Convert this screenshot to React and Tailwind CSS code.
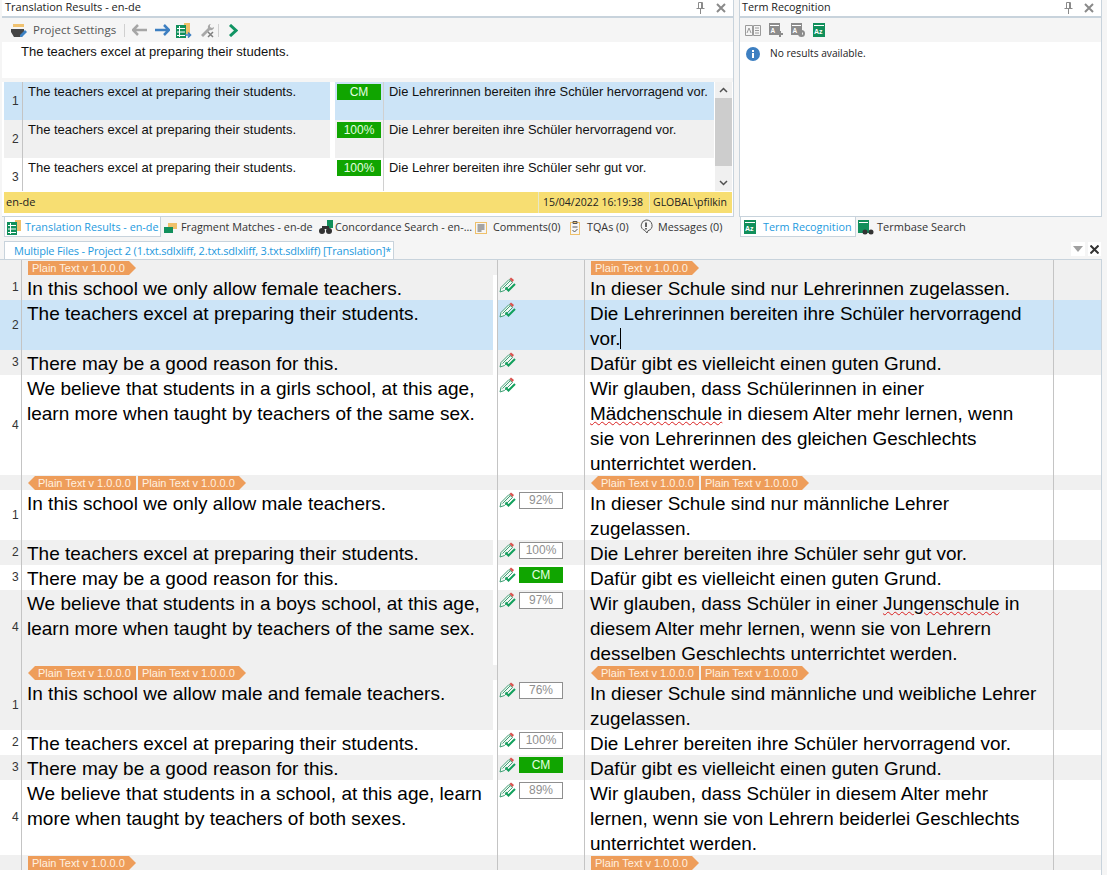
const sans = "font-['Liberation_Sans',Arial,sans-serif]";
const ui = "font-['Open_Sans','Noto_Sans',sans-serif]";

const results = [
  { n: 1, cls: "bg-[#cce4f7]", src: "The teachers excel at preparing their students.", badge: "CM", tgt: "Die Lehrerinnen bereiten ihre Schüler hervorragend vor.", h: "h-[38px]" },
  { n: 2, cls: "bg-[#f0f0f0]", src: "The teachers excel at preparing their students.", badge: "100%", tgt: "Die Lehrer bereiten ihre Schüler hervorragend vor.", h: "h-[38px]" },
  { n: 3, cls: "bg-white", src: "The teachers excel at preparing their students.", badge: "100%", tgt: "Die Lehrer bereiten ihre Schüler sehr gut vor.", h: "h-[33px]" },
];

const rows = [
  { tags: "single" },
  { n: 1, bg: "bg-[#f0f0f0]", h: "h-[25px]", src: "In this school we only allow female teachers.", tgt: "In dieser Schule sind nur Lehrerinnen zugelassen." },
  { n: 2, bg: "bg-[#cce4f7]", h: "h-[50px]", src: "The teachers excel at preparing their students.", tgt: "Die Lehrerinnen bereiten ihre Schüler hervorragend vor.", caret: true },
  { n: 3, bg: "bg-[#f0f0f0]", h: "h-[25px]", src: "There may be a good reason for this.", tgt: "Dafür gibt es vielleicht einen guten Grund." },
  { n: 4, bg: "bg-white", h: "h-[100px]", src: "We believe that students in a girls school, at this age, learn more when taught by teachers of the same sex.", tgt: <>Wir glauben, dass Schülerinnen in einer <Wavy>Mädchenschule</Wavy> in diesem Alter mehr lernen, wenn sie von Lehrerinnen des gleichen Geschlechts unterrichtet werden.</> },
  { tags: "double" },
  { n: 1, bg: "bg-white", h: "h-[50px]", src: "In this school we only allow male teachers.", tgt: "In dieser Schule sind nur männliche Lehrer zugelassen.", match: "92%" },
  { n: 2, bg: "bg-[#f0f0f0]", h: "h-[25px]", src: "The teachers excel at preparing their students.", tgt: "Die Lehrer bereiten ihre Schüler sehr gut vor.", match: "100%" },
  { n: 3, bg: "bg-white", h: "h-[25px]", src: "There may be a good reason for this.", tgt: "Dafür gibt es vielleicht einen guten Grund.", match: "CM" },
  { n: 4, bg: "bg-[#f0f0f0]", h: "h-[75px]", src: "We believe that students in a boys school, at this age, learn more when taught by teachers of the same sex.", tgt: <>Wir glauben, dass Schüler in einer <Wavy>Jungenschule</Wavy> in diesem Alter mehr lernen, wenn sie von Lehrern desselben Geschlechts unterrichtet werden.</>, match: "97%" },
  { tags: "double" },
  { n: 1, bg: "bg-[#f0f0f0]", h: "h-[50px]", src: "In this school we allow male and female teachers.", tgt: "In dieser Schule sind männliche und weibliche Lehrer zugelassen.", match: "76%" },
  { n: 2, bg: "bg-white", h: "h-[25px]", src: "The teachers excel at preparing their students.", tgt: "Die Lehrer bereiten ihre Schüler hervorragend vor.", match: "100%" },
  { n: 3, bg: "bg-[#f0f0f0]", h: "h-[25px]", src: "There may be a good reason for this.", tgt: "Dafür gibt es vielleicht einen guten Grund.", match: "CM" },
  { n: 4, bg: "bg-white", h: "h-[75px]", src: "We believe that students in a school, at this age, learn more when taught by teachers of both sexes.", tgt: "Wir glauben, dass Schüler in diesem Alter mehr lernen, wenn sie von Lehrern beiderlei Geschlechts unterrichtet werden.", match: "89%" },
  { tags: "single" },
];

function Wavy({ children }) {
  return <span className="underline decoration-wavy decoration-[#d92020] decoration-1 underline-offset-1">{children}</span>;
}

const PinClose = () => (
  <div className="flex items-center gap-[11px] mr-[7px]">
    <svg width="9" height="12" viewBox="0 0 9 12" fill="none" stroke="#8a8a8a"><path d="M2.5.5h4v6h-4zM.5 6.5h8M4.5 7v5M5.5 1v5" /></svg>
    <svg width="10" height="10" viewBox="0 0 10 10" stroke="#8a8a8a" strokeWidth="2"><path d="M1 1l8 8M9 1l-8 8" /></svg>
  </div>
);

const Tag = ({ dir }) => (
  <span className={`h-[14px] bg-[#ee9d5a] text-[#fff0e0] text-[11px] leading-[14px] ${sans} whitespace-nowrap ${
    dir === "left"
      ? "w-[108px] pl-[10px] [clip-path:polygon(7px_0,100%_0,100%_100%,7px_100%,0_50%)]"
      : "w-[108px] pl-[4px] [clip-path:polygon(0_0,calc(100%-7px)_0,100%_50%,calc(100%-7px)_100%,0_100%)]"
  }`}>Plain Text v 1.0.0.0</span>
);

const PencilCheck = () => (
  <svg width="17" height="16" viewBox="0 0 17 16" className="shrink-0">
    <path d="M1 15l1-4.500 8-8 3.500 3-8 8z" fill="#f2f8f4" stroke="#3f9f74" strokeWidth="1" />
    <path d="M3.500 11.500l8-8" stroke="#3f9f74" strokeWidth="1" />
    <path d="M10.500 2l1.500-1.500 3 2.500-1.500 2z" fill="#d9534f" />
    <path d="M6.500 10.500l3 3 6.500-6.500" fill="none" stroke="#12a05c" strokeWidth="2" />
  </svg>
);

const Match = ({ value }) =>
  value === "CM" ? (
    <span className={`w-[44px] h-[16px] bg-[#10a500] text-[#e4ffe0] text-[12px] leading-[16px] text-center ${sans}`}>CM</span>
  ) : (
    <span className={`w-[44px] h-[17px] bg-white border border-[#8f8f8f] text-[#8f8f8f] text-[12px] leading-[14px] text-center ${sans}`}>{value}</span>
  );

const AzIcon = () => (
  <svg width="12" height="14" viewBox="0 0 12 14" className="shrink-0">
    <rect width="12" height="14" fill="#118f5b" />
    <rect x="1" y="2" width="10" height="1" fill="#fff" />
    <text x="1" y="11" fontSize="7" fontWeight="bold" fill="#fff" fontFamily="Liberation Sans">Az</text>
  </svg>
);

const GridIcon = ({ className, arrow }) => (
  <svg width="16" height="15" viewBox="0 0 16 15" className={className}>
    <rect x="8" y="0" width="6" height="11" fill="#efc06a" />
    <rect x="0" y="2" width="10" height="13" fill="#118f5b" />
    <path d="M1 5.500h8M1 9h8M1 12.500h8M3.500 3v11" stroke="#fff" strokeWidth="1" />
    {arrow && <path d="M9 12h5M12 9.500l2.500 2.500-2.500 2.500" fill="none" stroke="#3d7fc1" strokeWidth="1.600" />}
  </svg>
);

const GrayDoc = ({ children }) => (
  <svg width="14" height="14" viewBox="0 0 14 14" className="shrink-0">
    <rect x="0" y="0" width="11" height="12" fill="#8c8c8c" />
    <rect x="1" y="2" width="9" height="1" fill="#fff" />
    <text x="1.500" y="10" fontSize="6.500" fontWeight="bold" fill="#fff" fontFamily="Liberation Sans">A</text>
    {children}
  </svg>
);

function Toolbar() {
  return (
    <div className={`h-[24px] bg-[#f5f5f5] flex items-center pl-[9px] text-[11.500px] text-[#555] ${ui}`}>
      <svg width="17" height="15" viewBox="0 0 17 15" className="shrink-0">
        <path d="M2 1h11v3H2z" fill="#f0c270" />
        <path d="M0 6h13v3l-2 5H3L0 9z" fill="#444" />
        <path d="M9 12l5-5 2 2-5 5H9z" fill="#3d82c4" />
      </svg>
      <span className="ml-[5px] w-[84px] whitespace-nowrap">Project Settings</span>
      <div className="w-px h-[13px] bg-[#d0d0d0] ml-[7px]" />
      <svg width="16" height="12" viewBox="0 0 16 12" className="ml-[7px]"><path d="M6 1L1 6l5 5M1 6h14" fill="none" stroke="#a6a6a6" strokeWidth="2.500" /></svg>
      <svg width="16" height="12" viewBox="0 0 16 12" className="ml-[6px]"><path d="M10 1l5 5-5 5M15 6H1" fill="none" stroke="#3d7fc1" strokeWidth="2.500" /></svg>
      <GridIcon className="ml-[6px]" arrow />
      <svg width="16" height="15" viewBox="0 0 16 15" className="ml-[7px]">
        <path d="M12 1a3 3 0 0 0-3 4L2 12l2 2 7-7a3 3 0 0 0 4-3l-2 1-2-1 0-2z" fill="#a8a8a8" />
        <path d="M9 9l5 5M14 9l-5 5" stroke="#808080" strokeWidth="1.500" />
      </svg>
      <div className="w-px h-[13px] bg-[#d0d0d0] ml-[3px]" />
      <svg width="10" height="13" viewBox="0 0 10 13" className="ml-[9px]"><path d="M2 1l6 5.500-6 5.500" fill="none" stroke="#119463" strokeWidth="3" /></svg>
    </div>
  );
}

function ResultRow({ r }) {
  return (
    <div className={`flex ${r.h}`}>
      <div className={`w-[19px] ${r.cls} border-r border-[#c4c4c4] pt-[12px] pl-[8px] text-[12px] leading-[14px] text-[#333]`}>{r.n}</div>
      <div className={`w-[307px] ${r.cls} pl-[5px] pt-[1px] leading-[17px] text-[13px] text-[#111] whitespace-nowrap`}>{r.src}</div>
      <div className="w-[5px] bg-white" />
      <div className={`w-[49px] ${r.cls} border-r border-[#d0d0d0] pl-[2px] pt-[2px] flex items-start`}>
        {r.badge === "CM" ? <Match value="CM" /> : <span className={`w-[44px] h-[16px] bg-[#10a500] text-[#e4ffe0] text-[12px] leading-[16px] text-center ${sans}`}>{r.badge}</span>}
      </div>
      <div className={`w-[330px] ${r.cls} pl-[5px] pt-[1px] leading-[17px] text-[12.900px] text-[#111] whitespace-nowrap`}>{r.tgt}</div>
    </div>
  );
}

function Scrollbar() {
  return (
    <div className="w-[17px] h-full bg-[#f0f0f0] flex flex-col ml-[1px]">
      <div className="h-[16px] flex items-center justify-center">
        <svg width="9" height="6" viewBox="0 0 9 6"><path d="M1 5l3.500-3.500L8 5" fill="none" stroke="#505050" strokeWidth="1.500" /></svg>
      </div>
      <div className="h-[68px] bg-[#cdcdcd]" />
      <div className="flex-1" />
      <div className="h-[16px] flex items-center justify-center">
        <svg width="9" height="6" viewBox="0 0 9 6"><path d="M1 1l3.500 3.500L8 1" fill="none" stroke="#505050" strokeWidth="1.500" /></svg>
      </div>
    </div>
  );
}

function TranslationPanel() {
  return (
    <div className="w-[732px] ml-[2px] h-[217px] bg-white border-r border-b border-[#c8d3dc] flex flex-col">
      <div className="h-[18px] flex items-center justify-between border-b-2 border-[#c8d3dc]">
        <span className={`pl-[3px] -mt-[1px] text-[11px] text-[#222] ${ui}`}>Translation Results - en-de</span>
        <PinClose />
      </div>
      <Toolbar />
      <div className={`h-[40px] pl-[19px] pt-[1px] text-[13px] leading-[17px] text-[#111] ${sans} border-b-4 border-[#f5f5f5]`}>The teachers excel at preparing their students.</div>
      <div className={`flex h-[109px] pl-[2px] ${sans}`}>
        <div className="w-[710px]">{results.map((r) => <ResultRow key={r.n} r={r} />)}</div>
        <Scrollbar />
      </div>
      <div className={`h-[21px] mt-[1px] ml-[2px] mr-[1px] bg-[#f7de72] flex items-center text-[10.500px] text-[#222] ${ui}`}>
        <span className="pl-[2px] flex-1 text-[11px]">en-de</span>
        <span className="w-[111px] h-full flex items-center pl-[4px] border-l border-[#e8e8c8] whitespace-nowrap">15/04/2022 16:19:38</span>
        <span className="w-[83px] h-full flex items-center pl-[3px] border-l border-[#e8e8c8] whitespace-nowrap">GLOBAL\pfilkin</span>
      </div>
    </div>
  );
}

function TermPanel() {
  return (
    <div className="w-[363px] ml-[5px] h-[217px] bg-white border-x border-b border-[#c8d3dc] flex flex-col">
      <div className="h-[18px] flex items-center justify-between border-b-2 border-[#c8d3dc]">
        <span className={`pl-[2px] -mt-[1px] text-[10.800px] text-[#222] ${ui}`}>Term Recognition</span>
        <PinClose />
      </div>
      <div className="h-[24px] bg-[#f5f5f5] flex items-center pl-[5px] gap-[8px]">
        <svg width="16" height="12" viewBox="0 0 16 12" fill="none" stroke="#9a9a9a"><path d="M.5 1.500h7v10h-7zM8.500 1.500h7v10h-7zM10 4h4M10 6.500h4M10 9h4M2 9l2-5 2 5" /></svg>
        <GrayDoc><path d="M8 11h6M11 8v6" stroke="#8c8c8c" strokeWidth="2" /></GrayDoc>
        <GrayDoc><circle cx="10.500" cy="10.500" r="2.500" fill="none" stroke="#8c8c8c" strokeWidth="2" /></GrayDoc>
        <AzIcon />
      </div>
      <div className="flex items-center pl-[6px] pt-[4px]">
        <svg width="14" height="14" viewBox="0 0 14 14" className="shrink-0">
          <circle cx="7" cy="7" r="7" fill="#3d7fc1" />
          <rect x="6" y="6" width="2" height="5" fill="#fff" />
          <rect x="6" y="3" width="2" height="2" fill="#fff" />
        </svg>
        <span className={`ml-[10px] text-[10.200px] text-[#222] ${ui}`}>No results available.</span>
      </div>
    </div>
  );
}

const TabsLeft = () => (
  <div className={`w-[732px] ml-[4px] flex items-start text-[10.800px] text-[#333] ${ui}`}>
    <div className="h-[20px] w-[157px] shrink-0 bg-white border border-t-0 border-[#c8d3dc] flex items-center pl-[2px] pt-[1px] text-[#1e9ade] whitespace-nowrap">
      <GridIcon className="shrink-0" />
      <span className="ml-[2px]">Translation Results - en-de</span>
    </div>
    <div className="h-[20px] w-[157px] shrink-0 flex items-center pl-[3px] pt-[1px] whitespace-nowrap">
      <svg width="13" height="10" viewBox="0 0 13 10" className="shrink-0"><rect x="4" y="0" width="9" height="6" fill="#efc06a" /><rect x="0" y="4" width="9" height="6" fill="#118f5b" /></svg>
      <span className="ml-[4px]">Fragment Matches - en-de</span>
    </div>
    <div className="h-[20px] w-[157px] shrink-0 flex items-center whitespace-nowrap">
      <svg width="16" height="15" viewBox="0 0 16 15" className="shrink-0"><rect x="9" y="0" width="6" height="8" fill="#118f5b" /><circle cx="4" cy="11" r="3" fill="#333" /><circle cx="11" cy="11" r="3" fill="#333" /><rect x="4" y="6" width="7" height="3" fill="#333" /></svg>
      <span className="ml-[1px]">Concordance Search - en-...</span>
    </div>
    <div className="h-[20px] w-[95px] shrink-0 flex items-center pt-[1px] whitespace-nowrap">
      <svg width="12" height="12" viewBox="0 0 12 12" className="shrink-0" fill="none"><rect x=".5" y=".5" width="11" height="11" stroke="#efc06a" /><path d="M2.500 3h7M2.500 5h7M2.500 7h7M2.500 9h4" stroke="#555" /></svg>
      <span className="ml-[6px]">Comments(0)</span>
    </div>
    <div className="h-[20px] w-[69px] shrink-0 flex items-center pt-[1px] whitespace-nowrap">
      <svg width="10" height="14" viewBox="0 0 10 14" className="shrink-0" fill="none"><rect x=".5" y="1.500" width="9" height="12" stroke="#efc06a" /><path d="M3 .5h4v2H3zM2.500 6h5M2.500 9l2 2 3-3" stroke="#555" /></svg>
      <span className="ml-[7px]">TQAs (0)</span>
    </div>
    <div className="h-[20px] shrink-0 flex items-center pt-[1px] whitespace-nowrap">
      <svg width="14" height="15" viewBox="0 0 14 15" className="shrink-0 -mt-[2px]" fill="none"><path d="M7 1a6 5.500 0 0 1 2 10.700l-1 2.300-2-2.500A6 5.500 0 0 1 7 1z" stroke="#555" /><path d="M7 3.500v4.500M7 9v1.500" stroke="#333" strokeWidth="1.500" /></svg>
      <span className="ml-[5px]">Messages (0)</span>
    </div>
  </div>
);

const TabsRight = () => (
  <div className={`ml-[4px] flex items-start text-[11px] text-[#333] ${ui}`}>
    <div className="h-[20px] w-[116px] shrink-0 bg-white border border-t-0 border-[#c8d3dc] flex items-center pl-[3px] pt-[1px] text-[#1e9ade] whitespace-nowrap">
      <AzIcon />
      <span className="ml-[7px] text-[10.800px]">Term Recognition</span>
    </div>
    <div className="h-[20px] flex items-center pt-[1px] whitespace-nowrap ml-[2px]">
      <svg width="16" height="15" viewBox="0 0 16 15" className="shrink-0"><rect width="11" height="13" fill="#118f5b" /><rect x="1" y="2" width="9" height="1" fill="#fff" /><circle cx="7" cy="12" r="2.500" fill="#333" /><circle cx="13" cy="12" r="2.500" fill="#333" /></svg>
      <span className="ml-[3px]">Termbase Search</span>
    </div>
  </div>
);

function EditorTabBar() {
  return (
    <div className="h-[22px] flex items-end justify-between">
      <div className={`ml-[4px] h-[18px] w-[390px] bg-white border border-b-0 border-[#c8d3dc] pl-[9px] text-[11px] leading-[17px] text-[#1e9ade] whitespace-nowrap tracking-[-0.18px] ${ui}`}>
        Multiple Files - Project 2 (1.txt.sdlxliff, 2.txt.sdlxliff, 3.txt.sdlxliff) [Translation]*
      </div>
      <div className="flex items-center gap-[3px] mb-[3px] mr-[6px]">
        <div className="w-[14px] h-[14px] bg-white flex items-center justify-center">
          <svg width="10" height="6" viewBox="0 0 10 6"><path d="M0 0h10L5 6z" fill="#a0a0a0" /></svg>
        </div>
        <div className="w-[13px] h-[14px] bg-white flex items-center justify-center">
          <svg width="9" height="9" viewBox="0 0 9 9" stroke="#333" strokeWidth="2"><path d="M.5.5l8 8M8.500.5l-8 8" /></svg>
        </div>
      </div>
    </div>
  );
}

function TagRow({ kind }) {
  return (
    <div className="h-[15px] flex bg-[#f0f0f0]">
      <div className="w-[22px] border-r border-[#c4c4c4]" />
      <div className="w-[476px] border-r border-[#c4c4c4] flex gap-[2px] pl-[6px] items-end">
        {kind === "double" && <Tag dir="left" />}
        <Tag dir="right" />
      </div>
      <div className="w-[87px] border-r border-[#c4c4c4]" />
      <div className="w-[469px] border-r border-[#c4c4c4] flex gap-[2px] pl-[6px] items-end">
        {kind === "double" && <Tag dir="left" />}
        <Tag dir="right" />
      </div>
      <div className="flex-1" />
    </div>
  );
}

function Segment({ row }) {
  return (
    <div className={`flex ${row.h} ${row.bg} text-[19px] leading-[25px] text-black ${sans}`}>
      <div className="w-[22px] border-r border-[#c4c4c4] flex items-center pl-[12px] text-[12px] text-[#333]">{row.n}</div>
      <div className="w-[471px] pl-[5px] pr-[4px] pt-[1px]">{row.src}</div>
      <div className="w-[5px] bg-white border-r border-[#c4c4c4]" />
      <div className="w-[87px] border-r border-[#c4c4c4] flex items-start gap-[3px] pl-[1px] pt-[2px]">
        <PencilCheck />
        {row.match && <Match value={row.match} />}
      </div>
      <div className="w-[469px] pl-[5px] pr-[12px] pt-[1px] border-r border-[#c4c4c4] text-[18.900px]">
        {row.tgt}
        {row.caret && <span className="inline-block w-px h-[21px] bg-black align-[-4px] -mr-px" />}
      </div>
      <div className="flex-1" />
    </div>
  );
}

export default function App() {
  return (
    <div className="w-[1107px] h-[875px] overflow-hidden bg-[#f5f5f5] flex flex-col">
      <div className="flex">
        <TranslationPanel />
        <TermPanel />
      </div>
      <div className="flex">
        <TabsLeft />
        <TabsRight />
      </div>
      <EditorTabBar />
      <div className="mr-[5px] bg-white border-t border-r border-[#c8d3dc] flex-1 overflow-hidden">
        {rows.map((row, i) => row.tags ? <TagRow key={i} kind={row.tags} /> : <Segment key={i} row={row} />)}
      </div>
    </div>
  );
}
